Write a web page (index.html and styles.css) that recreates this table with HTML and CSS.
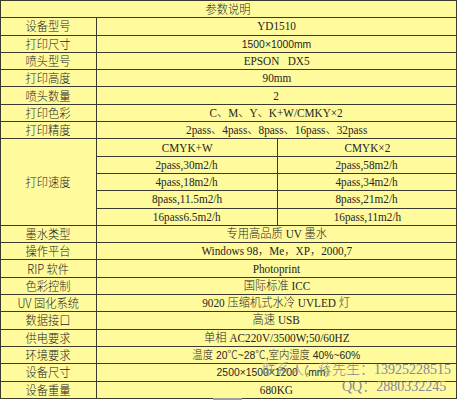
FILE: index.html
```html
<!DOCTYPE html>
<html lang="zh">
<head>
<meta charset="utf-8">
<title>参数说明</title>
<link rel="stylesheet" href="styles.css">
</head>
<body>
<div class="sheet">
  <div class="grid">
    <div class="c title"><span>参数说明</span></div>

    <div class="c lab"><span>设备型号</span></div><div class="c val"><span>YD1510</span></div>
    <div class="c lab"><span>打印尺寸</span></div><div class="c val sv"><span>1500×1000mm</span></div>
    <div class="c lab"><span>喷头型号</span></div><div class="c val"><span>EPSON&nbsp;&nbsp;&nbsp;DX5</span></div>
    <div class="c lab"><span>打印高度</span></div><div class="c val"><span>90mm</span></div>
    <div class="c lab"><span>喷头数量</span></div><div class="c val"><span>2</span></div>
    <div class="c lab"><span>打印色彩</span></div><div class="c val"><span>C、M、Y、K+W/CMKY×2</span></div>
    <div class="c lab"><span>打印精度</span></div><div class="c val"><span>2pass、4pass、8pass、16pass、32pass</span></div>

    <div class="c lab speed"><span>打印速度</span></div>
    <div class="c sub"><span>CMYK+W</span></div><div class="c sub"><span>CMYK×2</span></div>
    <div class="c sub"><span>2pass,30m2/h</span></div><div class="c sub"><span>2pass,58m2/h</span></div>
    <div class="c sub"><span>4pass,18m2/h</span></div><div class="c sub"><span>4pass,34m2/h</span></div>
    <div class="c sub"><span>8pass,11.5m2/h</span></div><div class="c sub"><span>8pass,21m2/h</span></div>
    <div class="c sub"><span>16pass6.5m2/h</span></div><div class="c sub"><span>16pass,11m2/h</span></div>

    <div class="c lab"><span>墨水类型</span></div><div class="c val"><span>专用高品质 UV 墨水</span></div>
    <div class="c lab"><span>操作平台</span></div><div class="c val"><span>Windows 98，Me，XP，2000,7</span></div>
    <div class="c lab"><span>RIP 软件</span></div><div class="c val"><span>Photoprint</span></div>
    <div class="c lab"><span>色彩控制</span></div><div class="c val"><span>国际标准 ICC</span></div>
    <div class="c lab"><span>UV 固化系统</span></div><div class="c val"><span>9020 压缩机式水冷 UVLED 灯</span></div>
    <div class="c lab"><span>数据接口</span></div><div class="c val"><span>高速 USB</span></div>
    <div class="c lab"><span>供电要求</span></div><div class="c val"><span>单相 AC220V/3500W;50/60HZ</span></div>
    <div class="c lab"><span>环境要求</span></div><div class="c val sv"><span>温度 20℃~28℃,室内湿度 40%~60%</span></div>
    <div class="c lab"><span>设备尺寸</span></div><div class="c val sv"><span>2500×1500×1200（mm）</span></div>
    <div class="c lab"><span>设备重量</span></div><div class="c val"><span>680KG</span></div>
  </div>

  <div class="mark">
    <div class="mline">联系人：蒋先生：13925228515</div>
    <div class="mline m2">QQ：2880332245</div>
  </div>
  <div class="thumb"></div>
</div>
</body>
</html>
```

FILE: styles.css
```css
html, body {
  margin: 0;
  padding: 0;
  background: #ffffff;
}

.sheet {
  position: relative;
  width: 459px;
  height: 400px;
  overflow: hidden;
}

.grid {
  display: grid;
  grid-template-columns: 95px 180px 178px;
  grid-auto-rows: 16.3px;
  gap: 1px;
  padding: 1px;
  width: max-content;
  background: #3b3a30;
}

.c {
  background: #fffa9c;
  display: flex;
  align-items: center;
  justify-content: center;
  color: #262626;
  font-family: "Liberation Serif", "Noto Sans CJK SC", serif;
  font-size: 12.5px;
  font-weight: 300;
  line-height: 14px;
  white-space: nowrap;
}

.c span {
  display: inline-block;
  transform: scaleX(0.9);
}

.title {
  grid-column: 1 / -1;
  font-family: "Noto Sans CJK SC", sans-serif;
}

.lab {
  grid-column: 1;
  font-family: "Noto Sans CJK SC", sans-serif;
}

.val {
  grid-column: 2 / 4;
}

.sv {
  font-family: "Liberation Sans", "Noto Sans CJK SC", sans-serif;
  font-size: 11.5px;
}

.speed {
  grid-row: span 5;
}

.mark {
  position: absolute;
  left: 262px;
  top: 361px;
  color: #858999;
  font-family: "Liberation Serif", "Noto Sans CJK SC", serif;
  font-size: 14px;
  line-height: 17px;
  font-weight: 300;
  white-space: nowrap;
}

.m2 {
  padding-left: 80px;
}

.thumb {
  position: absolute;
  left: 213px;
  top: 398px;
  width: 29px;
  height: 2px;
  background: #a0a0a0;
}
```
